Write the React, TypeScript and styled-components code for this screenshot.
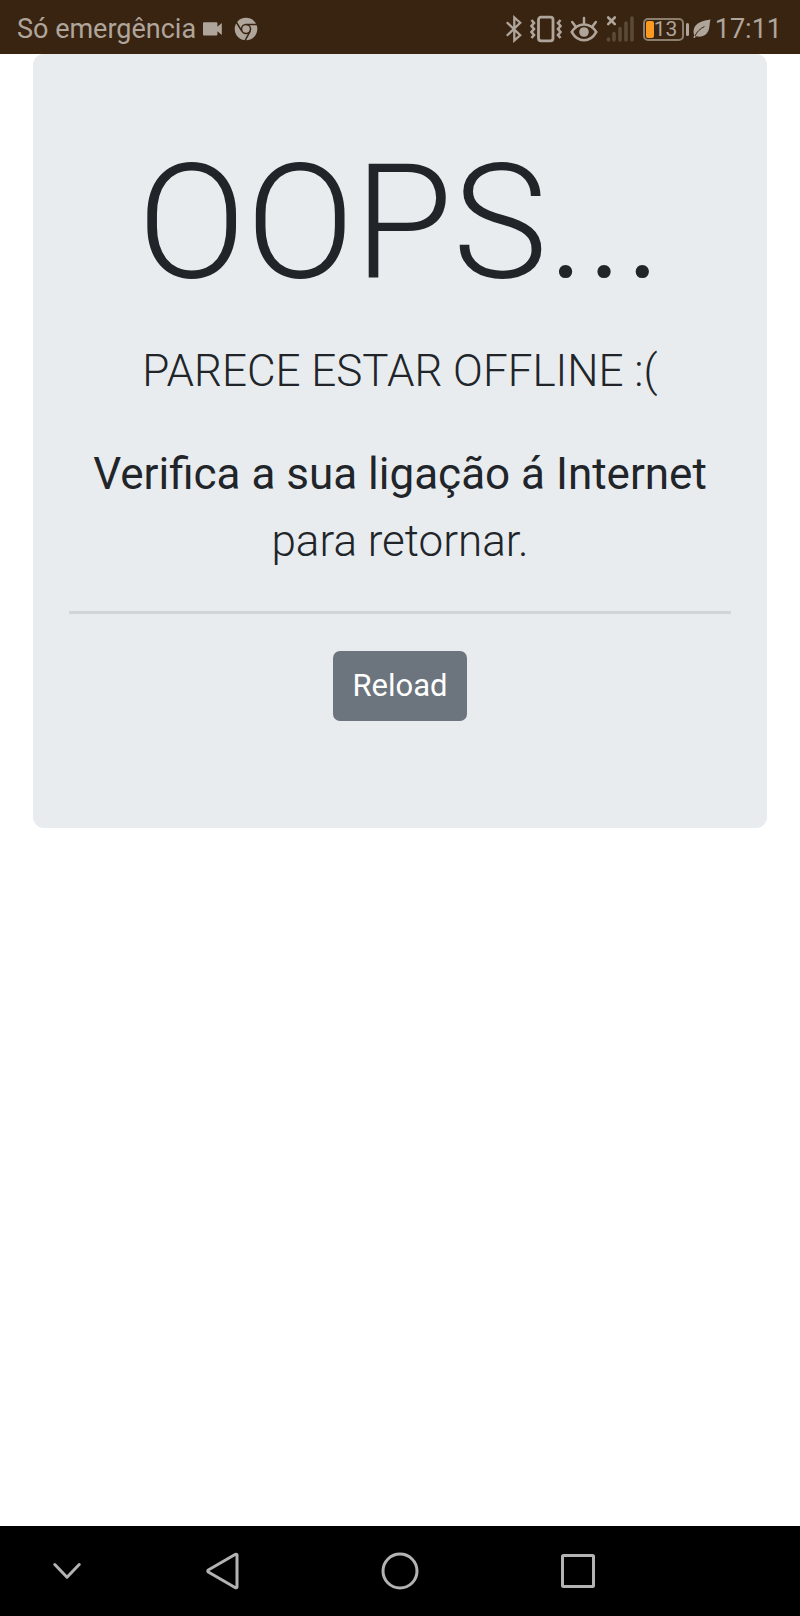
import React from 'react';
import styled, { createGlobalStyle } from 'styled-components';

const GlobalStyle = createGlobalStyle`
  *, *::before, *::after { box-sizing: border-box; }
  body {
    margin: 0;
    background: #ffffff;
    color: #212529;
    font-family: Roboto, "Liberation Sans", sans-serif;
  }
`;

const Screen = styled.div`
  display: flex;
  flex-direction: column;
  min-height: 100vh;
`;

const StatusBar = styled.header`
  display: flex;
  align-items: center;
  justify-content: space-between;
  height: 54px;
  padding: 4px 18px 0 17px;
  background: #382411;
  color: #b0a59b;
  font-size: 27px;
  line-height: 36px;
`;

const StatusGroup = styled.div<{ $gap: number }>`
  display: flex;
  align-items: center;
  gap: ${({ $gap }) => $gap}px;
  white-space: nowrap;
`;

const StatusIcon = styled.svg`
  display: block;
  flex: none;
`;

const Battery = styled.div`
  display: flex;
  align-items: center;
  gap: 2px;

  &::after {
    content: "";
    width: 3px;
    height: 13px;
    border-radius: 2px;
    background: currentColor;
  }
`;

const BatteryCase = styled.div`
  display: flex;
  align-items: center;
  width: 41px;
  height: 23px;
  padding: 1px;
  border: 2px solid #8d7f70;
  border-radius: 5px;
  font-size: 21px;
  line-height: 20px;

  &::before {
    content: "";
    width: 8px;
    height: 17px;
    flex: none;
    border-radius: 2px;
    background: #fb9a20;
  }
`;

const Content = styled.main`
  flex: 1;
  padding: 0 33px;
`;

const Jumbotron = styled.section`
  padding: 73px 36px 71px;
  border-radius: 11px;
  background: #e8ecef;
  text-align: center;
`;

const Title = styled.h1`
  margin: 0 0 19px;
  font-size: 160px;
  font-weight: 300;
  line-height: 192px;
`;

const Lead = styled.p`
  margin: 0 0 36px;
  font-size: 44px;
  font-weight: 300;
  line-height: 67px;

  strong { font-weight: 400; }
`;

const Divider = styled.hr`
  height: 3px;
  margin: 0 0 37px;
  border: 0;
  background: #d0d5d8;
`;

const ReloadButton = styled.button`
  display: block;
  margin: 0 auto 36px;
  padding: 12px 19px;
  border: 0;
  border-radius: 7px;
  background: #6c757d;
  color: #ffffff;
  font: 400 31px/46px Roboto, "Liberation Sans", sans-serif;
`;

const NavBar = styled.nav`
  display: grid;
  grid-template-columns: 3fr 4fr 4fr 4fr 3fr;
  height: 90px;
  background: #000000;
`;

const NavButton = styled.button`
  display: flex;
  align-items: center;
  justify-content: center;
  padding: 0;
  border: 0;
  background: none;
  color: #b3b3b3;

  svg {
    fill: none;
    stroke: currentColor;
    stroke-width: 3;
    stroke-linecap: round;
    stroke-linejoin: round;
  }
`;

const CameraIcon = () => (
  <StatusIcon width="20" height="14" viewBox="0 0 20 14" fill="currentColor" aria-hidden="true">
    <path d="M1 0.3h12.4a1 1 0 0 1 1 1v3.4L18.8 1v12l-4.4-3.8v3.3a1 1 0 0 1-1 1H1a1 1 0 0 1-1-1V1.3a1 1 0 0 1 1-1z" />
  </StatusIcon>
);

const ChromeIcon = () => (
  <StatusIcon width="24" height="24" viewBox="0 0 24 24" aria-hidden="true">
    <circle cx="12" cy="12" r="11.3" fill="currentColor" />
    <g fill="none" stroke="#382411" strokeWidth="1.5">
      <circle cx="12" cy="12" r="4.5" />
      <path d="M12 7.5h11M7.8 14.2L2.2 5M16.2 14.2L10.8 24" />
    </g>
  </StatusIcon>
);

const BluetoothIcon = () => (
  <StatusIcon width="16" height="28" viewBox="0 0 16 28" fill="none" stroke="currentColor" strokeWidth="2.3" aria-hidden="true">
    <path d="M.8 7.2L14.2 20.3 8.3 25.5V2.5l5.9 5.2L.8 20.8" />
  </StatusIcon>
);

const VibrateIcon = () => (
  <StatusIcon width="32" height="28" viewBox="0 0 32 28" fill="none" stroke="currentColor" aria-hidden="true">
    <rect x="8.5" y="2.2" width="14.5" height="23.6" rx="2.5" strokeWidth="2.8" />
    <path d="M1.5 5l2.5 3-2.5 3 2.5 3-2.5 3 2.5 3-2.5 3M30.5 5l-2.5 3 2.5 3-2.5 3 2.5 3-2.5 3 2.5 3" strokeWidth="2.6" />
  </StatusIcon>
);

const EyeIcon = () => (
  <StatusIcon width="28" height="28" viewBox="0 0 28 28" fill="none" stroke="currentColor" strokeWidth="2.5" strokeLinecap="round" aria-hidden="true">
    <path d="M1.7 17C5 11.7 9.2 9.4 14 9.4s9 2.3 12.3 7.6C23 22.7 18.8 25.3 14 25.3S5 22.7 1.7 17z" />
    <circle cx="14" cy="17" r="4.8" fill="currentColor" stroke="none" />
    <path d="M14 3v5M2.2 7l3 4M25.8 7l-3 4" />
  </StatusIcon>
);

const SignalIcon = () => (
  <StatusIcon width="28" height="28" viewBox="0 0 28 28" fill="none" strokeLinecap="round" aria-hidden="true">
    <path d="M2.5 24v1M8 18.5V25M14 13.5V25M20 8v17M26 3v22" stroke="#5c4a39" strokeWidth="3.5" />
    <path d="M2.2 2.5l6.6 6.6M8.8 2.5L2.2 9.1" stroke="currentColor" strokeWidth="2.6" />
  </StatusIcon>
);

const LeafIcon = () => (
  <StatusIcon width="18" height="20" viewBox="0 0 18 20" aria-hidden="true">
    <path d="M17.5.5C10 1.3 3 4 1.2 9c-.9 2.6-.9 5 0 7.2L.3 18.8l1.6.3.9-1.9c5.5 1.5 10.3-.5 12.5-5.2C17 8.3 16.3 4.5 17.5.5z" fill="currentColor" />
    <path d="M2 17C3.7 12.8 7 9.8 11.5 7.5" fill="none" stroke="#382411" strokeWidth="1" />
  </StatusIcon>
);

export default function App() {
  return (
    <Screen>
      <GlobalStyle />
      <StatusBar>
        <StatusGroup $gap={7}>
          <span>Só emergência</span>
          <StatusGroup $gap={11}>
            <CameraIcon />
            <ChromeIcon />
          </StatusGroup>
        </StatusGroup>
        <StatusGroup $gap={9}>
          <StatusGroup $gap={8}>
            <BluetoothIcon />
            <VibrateIcon />
            <EyeIcon />
            <SignalIcon />
          </StatusGroup>
          <StatusGroup $gap={4}>
            <Battery>
              <BatteryCase>13</BatteryCase>
            </Battery>
            <LeafIcon />
            <time>17:11</time>
          </StatusGroup>
        </StatusGroup>
      </StatusBar>
      <Content>
        <Jumbotron>
          <Title>OOPS...</Title>
          <Lead>PARECE ESTAR OFFLINE :(</Lead>
          <Lead>
            <strong>Verifica a sua ligação á Internet</strong>
            <br />
            para retornar.
          </Lead>
          <Divider />
          <ReloadButton type="button">Reload</ReloadButton>
        </Jumbotron>
      </Content>
      <NavBar>
        <NavButton type="button" aria-label="Hide">
          <svg width="28" height="18" viewBox="0 0 28 18"><path d="M1.8 2.5L14 15.2 26.2 2.5" /></svg>
        </NavButton>
        <NavButton type="button" aria-label="Back">
          <svg width="34" height="38" viewBox="0 0 34 38"><path d="M30.5 2.3a1 1 0 0 1 1.5.8v31.800a1 1 0 0 1-1.500.8L3.300 20a1.200 1.200 0 0 1 0-2z" /></svg>
        </NavButton>
        <NavButton type="button" aria-label="Home">
          <svg width="38" height="38" viewBox="0 0 38 38"><circle cx="19" cy="19" r="17" /></svg>
        </NavButton>
        <NavButton type="button" aria-label="Recent apps">
          <svg width="36" height="36" viewBox="0 0 36 36"><rect x="2.5" y="2.5" width="31" height="31" rx="1" /></svg>
        </NavButton>
      </NavBar>
    </Screen>
  );
}
